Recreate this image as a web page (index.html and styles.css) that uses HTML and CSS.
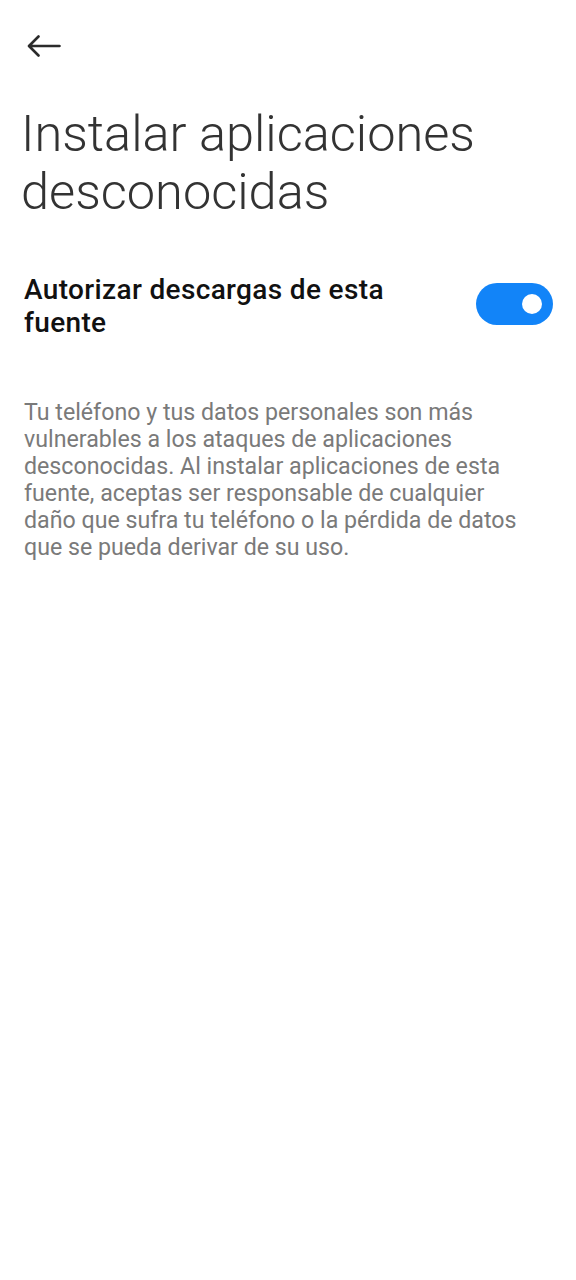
FILE: index.html
```html
<!DOCTYPE html>
<html lang="es">
<head>
<meta charset="utf-8">
<title>Instalar aplicaciones desconocidas</title>
<link rel="stylesheet" href="styles.css">
</head>
<body>
<header class="topbar">
  <button class="back" aria-label="Atrás">
    <svg width="34" height="22" viewBox="0 0 34 22" fill="none" stroke="#2b2b2b" stroke-width="2.6" stroke-linecap="round" stroke-linejoin="round">
      <path d="M32.5 11H2.5M11.5 1.5L2 11l9.5 9.5"/>
    </svg>
  </button>
</header>
<h1 class="title">Instalar aplicaciones desconocidas</h1>
<div class="setting-row">
  <div class="setting-label">Autorizar descargas de esta fuente</div>
  <div class="switch is-on" role="switch" aria-checked="true"><span class="knob"></span></div>
</div>
<p class="desc">Tu teléfono y tus datos personales son más vulnerables a los ataques de aplicaciones desconocidas. Al instalar aplicaciones de esta fuente, aceptas ser responsable de cualquier daño que sufra tu teléfono o la pérdida de datos que se pueda derivar de su uso.</p>
</body>
</html>
```

FILE: styles.css
```css
html, body {
  margin: 0;
  padding: 0;
  background: #ffffff;
}
body {
  font-family: Roboto, "Noto Sans", "Liberation Sans", sans-serif;
  width: 576px;
  min-height: 1280px;
}
.topbar {
  padding: 35px 0 0 27px;
}
.back {
  display: block;
  padding: 0;
  margin: 0;
  border: 0;
  background: none;
  line-height: 0;
}
.back svg {
  display: block;
}
.title {
  margin: 48px 24px 0 21px;
  font-size: 50.5px;
  line-height: 58px;
  font-weight: 300;
  color: #333333;
}
.setting-row {
  display: flex;
  align-items: flex-start;
  justify-content: space-between;
  gap: 50px;
  margin-top: 52px;
  padding: 0 23px 0 24px;
}
.setting-label {
  flex: 1;
  font-size: 28px;
  line-height: 33px;
  letter-spacing: 0.35px;
  font-weight: 500;
  color: #111111;
}
.switch {
  position: relative;
  flex: none;
  width: 77px;
  height: 42px;
  margin-top: 10px;
  border-radius: 21px;
  background: #1284f8;
}
.switch .knob {
  position: absolute;
  top: 11px;
  right: 11px;
  width: 20px;
  height: 20px;
  border-radius: 50%;
  background: #ffffff;
}
.desc {
  margin: 60px 48px 0 24px;
  font-size: 23.2px;
  line-height: 27px;
  color: #7a7a7a;
}
```
